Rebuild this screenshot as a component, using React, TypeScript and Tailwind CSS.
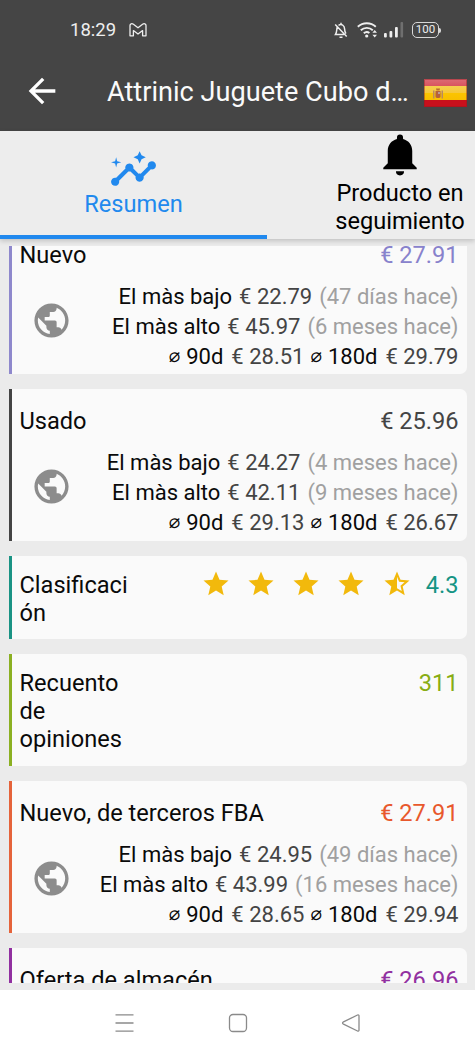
import type { ReactNode } from "react";
import { MdArrowBack, MdInsights, MdPublic, MdStar, MdStarHalf } from "react-icons/md";

function StatusBar() {
  return (
    <div className="flex h-[60px] items-center pl-[70px] pr-[34px] text-[#eeeeee]">
      <span className="mt-px w-[47px] text-[18.5px] leading-none">18:29</span>
      <svg className="ml-[12px]" width="18" height="14" viewBox="0 0 18 14" fill="none" stroke="currentColor" strokeWidth="1.3" strokeLinejoin="round">
        <path d="M1 2.500v10.300h3.400V7.600L9 11l4.600-3.400v5.200H17V2.500c0-1.800-2-2.300-3.400-1.200L9 4.800 4.400 1.300C3 .2 1 .7 1 2.500z" />
      </svg>
      <svg className="ml-auto" width="14" height="17" viewBox="0 0 14 17" fill="none" stroke="currentColor" strokeWidth="1.5">
        <path d="M7 .8v1.700M3.200 5C2.600 6.500 3.200 10 1.400 12.600H10M4.500 3.300C8 1.200 10.500 4 10.600 7c.1 2.200.6 3.600 1.300 4.600M1.200 2.500l11.500 12M5.500 15.300h3" />
      </svg>
      <svg className="ml-[9px]" width="22" height="16" viewBox="0 0 22 16" fill="none" stroke="currentColor" strokeWidth="1.9">
        <path d="M.8 4.800c5-4.700 13-4.700 18 0M3.800 8.300c3.500-3.300 8.600-3.300 12 0M6.800 11.300c1.700-1.600 4-1.600 5.600-.3" />
        <circle cx="9.700" cy="14" r="1.600" fill="currentColor" stroke="none" />
        <path d="M15.400 10.800l2.300-2.700 2.300 2.700zM15.400 12.800l2.300 2.700 2.300-2.700z" fill="currentColor" stroke="none" />
      </svg>
      <svg className="ml-[5px]" width="20" height="16" viewBox="0 0 20 16" fill="currentColor">
        <rect x="0" y="11" width="2.800" height="4.500" rx="1" />
        <rect x="5.500" y="9" width="2.800" height="6.500" rx="1" />
        <rect x="11" y="5" width="2.800" height="10.500" rx="1" />
        <rect x="16.500" y="0" width="2.600" height="15.500" rx="1" opacity=".25" />
      </svg>
      <div className="ml-[8px] flex items-center">
        <div className="flex h-[16px] w-[27px] items-center justify-center rounded-[5px] border-[1.5px] border-[#d8d8d8] text-[11.5px] leading-none">
          100
        </div>
        <div className="h-[5px] w-[2px] rounded-r bg-[#d8d8d8]" />
      </div>
    </div>
  );
}

function SpainFlag() {
  return (
    <svg width="43" height="28" viewBox="0 0 43 28">
      <defs>
        <linearGradient id="red" x1="0" y1="0" x2="0" y2="1">
          <stop offset="0" stopColor="#dc6b75" />
          <stop offset="1" stopColor="#d8505c" />
        </linearGradient>
        <linearGradient id="gold" x1="0" y1="0" x2="0" y2="1">
          <stop offset="0" stopColor="#f5cf4f" />
          <stop offset=".45" stopColor="#f6c83a" />
          <stop offset=".5" stopColor="#fbc400" />
          <stop offset="1" stopColor="#f7bd00" />
        </linearGradient>
      </defs>
      <rect width="43" height="8" fill="url(#red)" />
      <rect y="7" width="43" height="15" fill="url(#gold)" />
      <rect y="21" width="43" height="7" fill="#c8101c" />
      <path d="M9 11.500h1.500v8H9zM17.500 11.500H19v8h-1.500z" fill="#b98a60" />
      <path d="M11.500 12h5v5.500c0 2-5 2-5 0z" fill="#b5603c" />
      <path d="M12 9.500h4l-.5 2h-3z" fill="#b86a30" />
      <path d="M14 13h2v2h-2z" fill="#b79b9b" />
      <rect x=".5" y=".5" width="42" height="27" fill="none" stroke="#8c1c22" strokeOpacity=".45" />
    </svg>
  );
}

function Header() {
  return (
    <div className="flex h-[71px] items-center pb-[9px] pl-[21.500px] text-white">
      <MdArrowBack className="size-[40px] shrink-0" />
      <div className="ml-[45.500px] mt-px w-[317px] shrink-0 whitespace-nowrap text-[27.150px] leading-8 text-[#fafafa]">Attrinic Juguete Cubo d…</div>
      <div className="mt-[3px] shrink-0">
        <SpainFlag />
      </div>
    </div>
  );
}

function Tabs() {
  return (
    <div className="relative z-10 flex h-[108px] bg-[#ededed] shadow-[0_2px_5px_rgba(0,0,0,0.18)]">
      <div className="flex w-[267px] shrink-0 flex-col items-center border-b-[4px] border-[#2189ee] pt-[14px] text-[#2189ee]">
        <MdInsights className="size-[49px]" />
        <span className="-mt-[4px] text-[23.600px] leading-7">Resumen</span>
      </div>
      <div className="flex w-[266px] shrink-0 flex-col items-center pt-[3px] text-black">
        <svg width="34" height="42" viewBox="3.700 1.700 16.600 20.600">
          <path d="M14 20a2 2 0 0 1-4 0h4zM12 2a1.500 1.500 0 0 1 1.500 1.500v.7C16.200 4.900 18 7.200 18 10v6l2.200 2.300v.7H3.800v-.7L6 16v-6c0-2.800 1.800-5.100 4.500-5.800v-.7A1.500 1.500 0 0 1 12 2z" />
        </svg>
        <span className="mt-[3px] text-center text-[23.600px] leading-7">
          Producto en
          <br />
          seguimiento
        </span>
      </div>
    </div>
  );
}

function Card({ bar, title, value, color, children }: { bar: string; title: ReactNode; value: ReactNode; color: string; children?: ReactNode }) {
  return (
    <div className={`shrink-0 rounded-r-[7px] border-l-[3px] bg-[#fafafa] pb-[3px] pl-[7.500px] pr-[8.500px] pt-[18px] ${bar}`}>
      <div className="flex justify-between text-[23.600px] leading-7">
        <div className="text-[#0a0a0a]">{title}</div>
        <div className={color}>{value}</div>
      </div>
      {children}
    </div>
  );
}

function Avg({ label, price }: { label: string; price: string }) {
  return (
    <>
      <span className="-mt-[2px] font-['DejaVu_Sans'] text-[19px]">⌀</span>
      <span>{label}</span>
      <span className="ml-[2px] text-[#444444]">{price}</span>
    </>
  );
}

type Stat = { price: string; ago: string };

function PriceDetails({ low, high, avg90, avg180 }: { low: Stat; high: Stat; avg90: string; avg180: string }) {
  return (
    <div className="mt-[13px] flex items-start justify-between">
      <MdPublic className="ml-[11.500px] mt-[18px] size-[41px] text-[#8c8c8c]" />
      <div className="text-[22px] leading-[30px] text-[#0a0a0a]">
        <div className="flex h-[30px] justify-end gap-[7px]">
          <span>El màs bajo</span>
          <span className="text-[#444444]">{low.price}</span>
          <span className="text-[#a0a0a0]">({low.ago})</span>
        </div>
        <div className="flex h-[30px] justify-end gap-[7px]">
          <span>El màs alto</span>
          <span className="text-[#444444]">{high.price}</span>
          <span className="text-[#a0a0a0]">({high.ago})</span>
        </div>
        <div className="flex h-[30px] justify-end gap-[6px]">
          <Avg label="90d" price={avg90} />
          <Avg label="180d" price={avg180} />
        </div>
      </div>
    </div>
  );
}

function Rating() {
  return (
    <div className="flex items-center">
      <div className="mr-[14px] flex gap-[15.300px] text-[#f2b90c]">
        <MdStar className="-mt-[3px] size-[30px]" />
        <MdStar className="-mt-[3px] size-[30px]" />
        <MdStar className="-mt-[3px] size-[30px]" />
        <MdStar className="-mt-[3px] size-[30px]" />
        <MdStarHalf className="-mt-[3px] size-[30px]" />
      </div>
      4.3
    </div>
  );
}

function NavBar() {
  return (
    <div className="flex h-[66px] items-center justify-center gap-[93px] bg-white text-[#8a8a8a]">
      <svg width="20" height="20" viewBox="0 0 20 20" fill="none" stroke="currentColor" strokeWidth="1.300">
        <path d="M.5 1.800h18M.5 10h18M.5 18.200h18" />
      </svg>
      <svg width="20" height="20" viewBox="0 0 20 20" fill="none" stroke="currentColor" strokeWidth="1.300">
        <rect x="1.500" y="1.500" width="17" height="17" rx="3.500" />
      </svg>
      <svg width="20" height="20" viewBox="0 0 20 20" fill="none" stroke="currentColor" strokeWidth="1.300" strokeLinejoin="round">
        <path d="M16.500 2L2 9.200c-.6.400-.6 1.200 0 1.600L16.500 18c.8.400 1.500 0 1.500-.8V2.800c0-.8-.7-1.200-1.500-.8z" />
      </svg>
    </div>
  );
}

export default function App() {
  return (
    <div className="flex h-[1056px] w-[475px] flex-col overflow-hidden bg-[#ebebeb] font-['Roboto',sans-serif]">
      <div className="h-[131px] shrink-0 bg-[#454545]">
        <StatusBar />
        <Header />
      </div>
      <Tabs />
      <div className="mb-[7px] mt-[7px] min-h-0 flex-1 overflow-hidden pl-[9px] pr-[8px]">
        <div className="-mt-[24px] flex flex-col gap-[15px]">
          <Card bar="border-[#8e88cc] pt-[18.500px]! pb-[2.500px]!" color="text-[#8882cc]" title="Nuevo" value="€ 27.91">
            <PriceDetails low={{ price: "€ 22.79", ago: "47 días hace" }} high={{ price: "€ 45.97", ago: "6 meses hace" }} avg90="€ 28.51" avg180="€ 29.79" />
          </Card>
          <Card bar="border-[#444444]" color="text-[#444444]" title="Usado" value="€ 25.96">
            <PriceDetails low={{ price: "€ 24.27", ago: "4 meses hace" }} high={{ price: "€ 42.11", ago: "9 meses hace" }} avg90="€ 29.13" avg180="€ 26.67" />
          </Card>
          <Card
            bar="border-[#1a9384] h-[83px] pt-[15px]!"
            color="text-[#159484]"
            title={
              <>
                Clasificaci
                <br />
                ón
              </>
            }
            value={<Rating />}
          />
          <Card
            bar="border-[#8bb022] h-[112px] pt-[15px]!"
            color="text-[#88ad14]"
            title={
              <>
                Recuento
                <br />
                de
                <br />
                opiniones
              </>
            }
            value="311"
          />
          <Card bar="border-[#e5633a]" color="text-[#e8582c]" title="Nuevo, de terceros FBA" value="€ 27.91">
            <PriceDetails low={{ price: "€ 24.95", ago: "49 días hace" }} high={{ price: "€ 43.99", ago: "16 meses hace" }} avg90="€ 28.65" avg180="€ 29.94" />
          </Card>
          <Card bar="border-[#9130a0] h-[152px]" color="text-[#9130a0]" title="Oferta de almacén" value="€ 26.96" />
        </div>
      </div>
      <NavBar />
    </div>
  );
}
